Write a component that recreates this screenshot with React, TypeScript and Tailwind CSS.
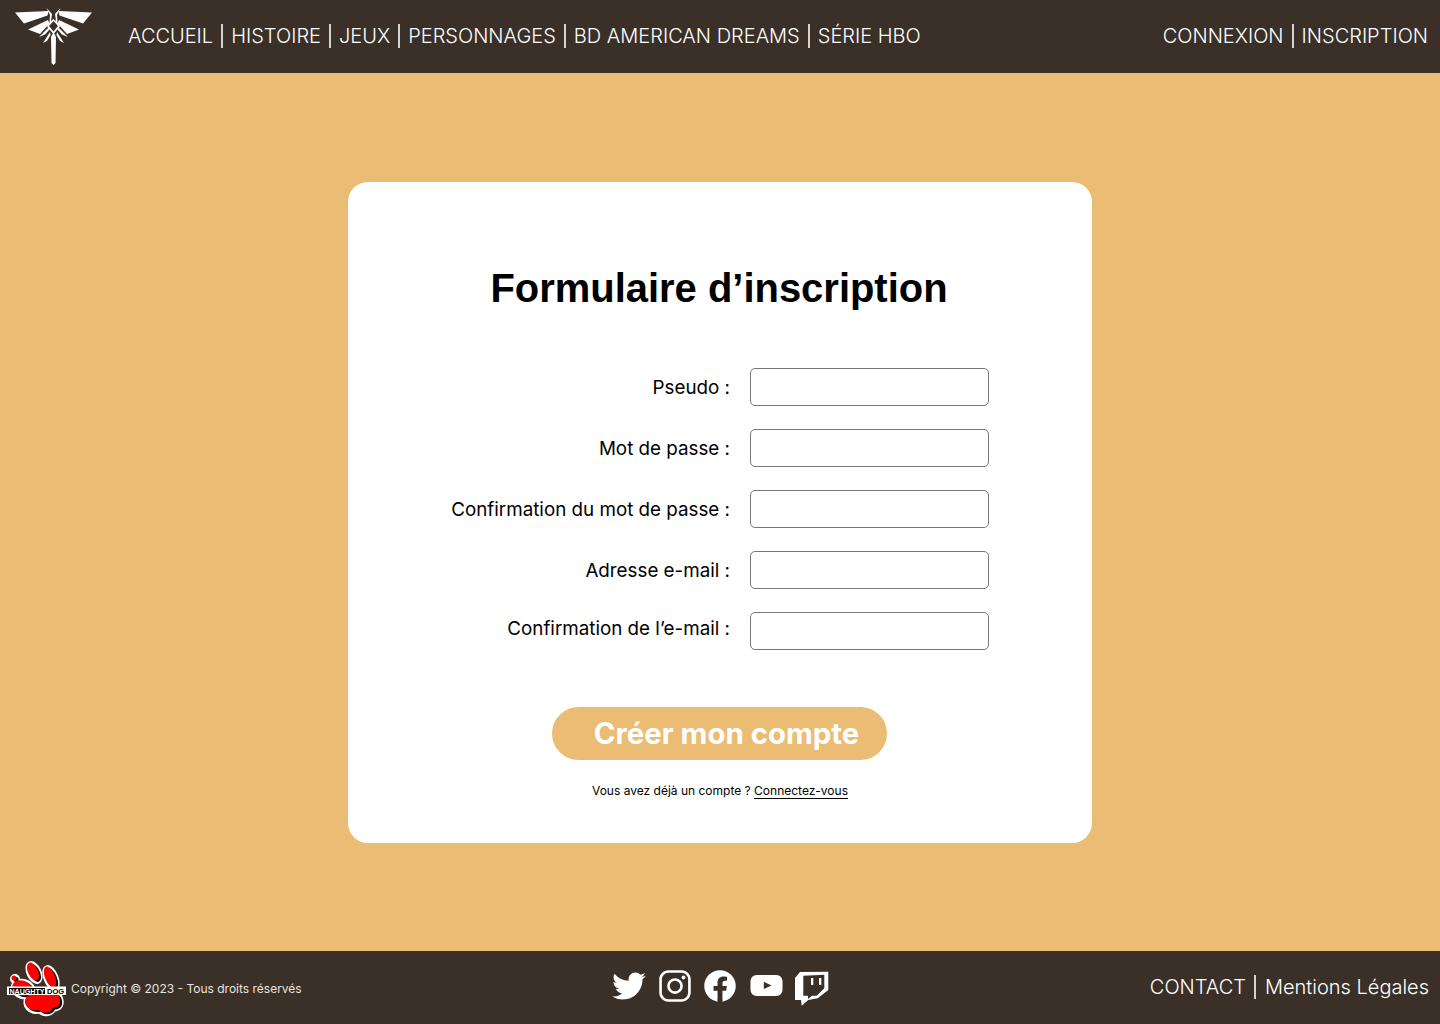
import React from "react";
import { IoLogoTwitter, IoLogoInstagram, IoLogoFacebook } from "react-icons/io5";

const Sep = ({ wide }: { wide?: boolean }) => (
  <span className={`block w-[2px] h-[24px] bg-[#d6d2cd] ${wide ? "ml-[8px] mr-[9px]" : "mx-[8px]"}`} />
);

function Nav({ items, wide }: { items: string[]; wide?: boolean }) {
  return (
    <nav className="flex items-center text-[20px] font-light text-white whitespace-nowrap">
      {items.map((t, i) => (
        <React.Fragment key={t}>
          {i > 0 && <Sep wide={wide} />}
          <span>{t}</span>
        </React.Fragment>
      ))}
    </nav>
  );
}

function Firefly() {
  const left = (
    <g fill="#fff">
      <polygon points="5,10.5 38.5,9 37.5,13.5 14,21.5" />
      <polygon points="18,27.5 38,18 39.5,21.5 30,32" />
      <polygon points="29,35 38.5,25.5 39.5,27.5 35,32.5" />
      <polygon points="33,41 40,30 40.5,33 37,39" />
      <polygon points="36.5,6 42,12 41,19 42,22 39.5,20 40,13" />
    </g>
  );
  return (
    <svg width="90" height="66" viewBox="0 0 90 66" className="block mb-[1px]">
      {left}
      <g transform="matrix(-1 0 0 1 87 0)">{left}</g>
      <polygon fill="#fff" points="43.5,17 48,21 50,24.5 44,31.5 43,31.5 37,24.5 39,21" />
      <polygon fill="#3a3027" points="43.5,19 48,24 43.5,29.5 39,24" />
      <polygon fill="#fff" points="43.5,30 46,35 45.5,61 43.5,63 41.5,61 41,35" />
    </svg>
  );
}

function Paw() {
  const toes = (
    <>
      <ellipse cx="27" cy="13.5" rx="5" ry="9.5" transform="rotate(-25 27 13.5)" />
      <ellipse cx="44" cy="19" rx="5" ry="11" transform="rotate(-22 44 19)" />
      <ellipse cx="16" cy="30" rx="10" ry="7.5" transform="rotate(15 16 30)" />
      <circle cx="8" cy="20" r="2.5" />
      <path d="M19 42 C24 30 46 28 53 38 C56 45 53 50 47 50 C44 56 36 56 33 52 C27 54 18 50 19 42Z" />
    </>
  );
  return (
    <svg width="62" height="60" viewBox="0 0 62 60" className="block overflow-visible">
      <g fill="#fff" stroke="#fff" strokeWidth="5" strokeLinejoin="round" transform="translate(1 1)">{toes}</g>
      <g fill="#000" transform="translate(2 1.5)">{toes}</g>
      <g fill="#ff0000">{toes}</g>
      <rect x="1" y="28.5" width="59" height="8.5" fill="#fff" />
      <rect x="3" y="30" width="36" height="6" fill="#000" />
      <text x="3.5" y="35.5" fontSize="7" fontWeight="700" fill="#fff" fontFamily="Liberation Sans, sans-serif" textLength="35" lengthAdjust="spacingAndGlyphs">NAUGHTY</text>
      <text x="41" y="35.5" fontSize="7" fontWeight="700" fill="#000" fontFamily="Liberation Sans, sans-serif" textLength="17" lengthAdjust="spacingAndGlyphs">DOG</text>
    </svg>
  );
}

function Youtube() {
  return (
    <svg width="36" height="36" viewBox="0 0 36 36" className="block">
      <path
        fillRule="evenodd"
        fill="#fff"
        d="M8.5 7 H28.5 A6 6 0 0 1 34.5 13 V22 A6 6 0 0 1 28.5 28 H8.5 A6 6 0 0 1 2.5 22 V13 A6 6 0 0 1 8.5 7 Z M15.8 13.7 V21 L23.5 17.5 Z"
      />
    </svg>
  );
}

function Twitch() {
  return (
    <svg width="36" height="36" viewBox="0 0 36 36" className="block overflow-visible">
      <path
        fillRule="evenodd"
        fill="#fff"
        d="M2 10 L7 4 L35.3 3.7 V22 L24.7 30.3 L15.3 32 L8.7 37.7 L8 32 H2 Z M10.3 7.7 V27.7 H15 V31 L19 27.7 H23.7 L31.3 20.3 V6.8 Z M18 10 H20.3 V17 H18 Z M26 10 H28.3 V17 H26 Z"
      />
    </svg>
  );
}

const rows = [
  "Pseudo :",
  "Mot de passe :",
  "Confirmation du mot de passe :",
  "Adresse e-mail :",
  "Confirmation de l’e-mail :",
];

export default function App() {
  return (
    <div className="flex flex-col h-[1024px] bg-[#ebbc74] font-['Inter',sans-serif]">
      <header className="h-[73px] shrink-0 bg-[#3a3027] flex items-center justify-between pl-[10px] pr-[12px] pb-[2px]">
        <div className="flex items-center gap-[28px]">
          <Firefly />
          <Nav items={["ACCUEIL", "HISTOIRE", "JEUX", "PERSONNAGES", "BD AMERICAN DREAMS", "SÉRIE HBO"]} />
        </div>
        <Nav items={["CONNEXION", "INSCRIPTION"]} />
      </header>

      <main className="flex-1 flex items-center justify-center">
        <section className="w-[744px] h-[661px] bg-white rounded-[20px] flex flex-col items-center pt-[83px]">
          <h1 className="font-['Liberation_Sans',sans-serif] font-bold text-[39.95px] leading-[46px] text-black -translate-x-px">
            Formulaire d’inscription
          </h1>
          <form className="w-full mt-[57px] flex flex-col gap-[23px]">
            {rows.map((r, i) => (
              <div key={r} className="flex items-center gap-[20px] h-[38px]">
                <label className={`w-[382px] text-right text-[18.8px] text-black ${i === 4 ? "pb-[2px]" : "pt-[3px]"}`}>{r}</label>
                <input className="w-[239px] h-[38px] bg-white border border-[#777] rounded-[5px]" />
              </div>
            ))}
          </form>
          <button className="mt-[57px] mr-[1px] w-[335px] h-[53px] rounded-full bg-[#ebbc74] text-white font-bold text-[29.4px] pl-[14px] pt-[3px]">
            Créer mon compte
          </button>
          <p className="mt-[23px] text-[12px] leading-[15px] text-black">
            Vous avez déjà un compte ? <a className="border-b border-black">Connectez-vous</a>
          </p>
        </section>
      </main>

      <footer className="h-[73px] shrink-0 bg-[#3a3027] flex items-center pl-[6px] pr-[11px]">
        <div className="flex-1 flex items-center gap-[3px]">
          <Paw />
          <span className="text-[12px] text-[#e8e4df] pt-[2px]">Copyright © 2023 - Tous droits réservés</span>
        </div>
        <div className="flex items-center gap-[9.5px] text-white pb-[3px] ml-[5px]">
          <IoLogoTwitter size={36} />
          <IoLogoInstagram size={36} />
          <IoLogoFacebook size={36} />
          <Youtube />
          <Twitch />
        </div>
        <div className="flex-1 flex justify-end pb-[2px]">
          <Nav items={["CONTACT", "Mentions Légales"]} wide />
        </div>
      </footer>
    </div>
  );
}
